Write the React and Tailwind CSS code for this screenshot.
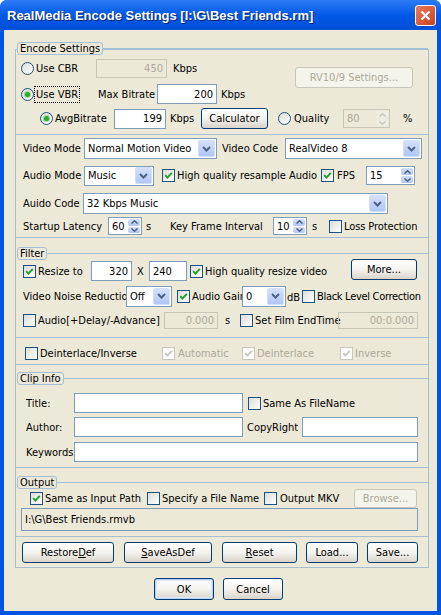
import React from 'react'

const FONT = "font-['DejaVu_Sans_Condensed','Liberation_Sans',sans-serif]"

function Check({ checked, disabled }) {
  return (
    <span
      className={`flex h-[13px] w-[13px] shrink-0 items-center justify-center border ${
        disabled ? 'border-[#cac8bb] bg-white' : 'border-[#1c5180] bg-linear-to-br from-[#dcdcd7] to-white'
      }`}
    >
      {checked && (
        <svg width="9" height="9" viewBox="0 0 9 9">
          <path d="M1.2 4.2 L3.4 6.6 L7.8 1.8" fill="none" stroke={disabled ? '#cac8bb' : '#21a121'} strokeWidth="1.9" />
        </svg>
      )}
    </span>
  )
}

function Radio({ checked }) {
  return (
    <span className="flex h-[13px] w-[13px] shrink-0 items-center justify-center rounded-full border border-[#1c5180] bg-linear-to-br from-[#dcdcd7] to-white">
      {checked && <span className="h-[5px] w-[5px] rounded-full bg-[#2fa82f] shadow-[0_0_0_1px_#9bd89b]" />}
    </span>
  )
}

function Field({ w, h = 'h-[20px]', value = '', right, disabled, ro }) {
  let tone = 'border-[#7f9db9] bg-white'
  if (disabled) tone = 'border-[#c9c7ba] text-[#aca899]'
  if (ro) tone = 'border-[#7f9db9]'
  return (
    <span className={`flex shrink-0 items-center border px-[3px] ${tone} ${right ? 'justify-end' : ''} ${w} ${h}`}>
      {value}
    </span>
  )
}

function Chevron() {
  return (
    <svg width="9" height="6" viewBox="0 0 9 6">
      <path d="M1 1 L4.5 4.5 L8 1" fill="none" stroke="#4d6185" strokeWidth="2" />
    </svg>
  )
}

function Select({ w, h = 'h-[21px]', value }) {
  return (
    <span className={`flex shrink-0 items-center border border-[#7f9db9] bg-white pl-[3px] pr-px ${w} ${h}`}>
      <span className="flex-1 overflow-hidden whitespace-nowrap">{value}</span>
      <span className="flex h-[17px] w-[17px] items-center justify-center rounded-[2px] border border-[#d2dffa] bg-linear-to-b from-[#d4e0fb] to-[#b0c6f5]">
        <Chevron />
      </span>
    </span>
  )
}

function SpinArrow({ up, disabled }) {
  return (
    <span
      className={`flex flex-1 items-center justify-center rounded-[2px] ${
        disabled ? 'bg-[#efeee6]' : 'bg-linear-to-b from-[#d4e0fb] to-[#b0c6f5]'
      }`}
    >
      <svg width="7" height="4" viewBox="0 0 7 4">
        <path
          d={up ? 'M0.5 3.5 L3.5 0.8 L6.5 3.5' : 'M0.5 0.5 L3.5 3.2 L6.5 0.5'}
          fill="none"
          stroke={disabled ? '#cac8bb' : '#4d6185'}
          strokeWidth="1.5"
        />
      </svg>
    </span>
  )
}

function Spin({ w, iw, h = 'h-[19px]', value, disabled }) {
  return (
    <span
      className={`flex shrink-0 border ${disabled ? 'border-[#c9c7ba] text-[#aca899]' : 'border-[#7f9db9] bg-white'} ${w} ${h}`}
    >
      <span className={`flex items-center px-[3px] ${iw}`}>{value}</span>
      <span className="flex flex-1 flex-col gap-px p-px">
        <SpinArrow up disabled={disabled} />
        <SpinArrow disabled={disabled} />
      </span>
    </span>
  )
}

function Btn({ w, h = 'h-[21px]', children, disabled, def }) {
  const tone = disabled
    ? 'border-[#c9c7ba] text-[#aca899] bg-[#f5f4ea]'
    : 'border-[#003c74] bg-linear-to-b from-white via-[#f4f3ee] to-[#d9d4c9]'
  return (
    <span
      className={`flex shrink-0 items-center justify-center rounded-[3px] border ${tone} ${
        def ? 'shadow-[inset_0_0_0_1px_#b9cff5,inset_0_0_0_2px_#dce7fb]' : ''
      } ${w} ${h}`}
    >
      {children}
    </span>
  )
}

function Header({ label, mt }) {
  return (
    <div className={`flex h-[13px] items-center pl-px ${mt}`}>
      <span className="flex h-[13px] items-center rounded-[3px] border border-[#a4bed4] bg-[#ece9d8] px-[2px] leading-none">
        {label}
      </span>
      <span className="h-px flex-1 bg-[#a4bed4]" />
    </div>
  )
}

function Sep({ mt }) {
  return <div className={`h-px bg-[#a4bed4] ${mt}`} />
}

export default function App() {
  return (
    <div className={`${FONT} flex h-[615px] w-[441px] flex-col overflow-hidden rounded-t-[7px] bg-[#0054e3] text-[11px] leading-none text-black`}>
      <div className="flex h-[30px] shrink-0 items-center bg-linear-to-b from-[#2b7cf5] via-[#0058e6] to-[#0050d8] pl-[7px] pr-[5px]">
        <span className="font-['Liberation_Sans',sans-serif] text-[13px] font-bold text-white [text-shadow:1px_1px_0_#0a246a]">
          RealMedia Encode Settings [I:\G\Best Friends.rm]
        </span>
        <span className="ml-auto flex h-[21px] w-[21px] items-center justify-center rounded-[3px] border border-white bg-linear-to-br from-[#e97b5b] to-[#c9401c]">
          <svg width="11" height="11" viewBox="0 0 11 11">
            <path d="M1.5 1.5 L9.5 9.5 M9.5 1.5 L1.5 9.5" stroke="white" strokeWidth="2.2" />
          </svg>
        </span>
      </div>

      <div className="mx-[4px] flex h-[581px] flex-col bg-[#ece9d8] pl-[11px]">
        <div className="mt-[19px] flex w-[414px] flex-col border border-[#a4bed4] pb-[4px]">
          <div className="-mt-[8px]">
            <Header label="Encode Settings" mt="mt-0" />
          </div>

          <div className="mt-[3px] flex">
            <div className="flex w-[279px] flex-col">
              <div className="flex h-[20px] items-center">
                <span className="ml-[5px]"><Radio /></span>
                <span className="ml-px w-[61px] pl-px">Use CBR</span>
                <Field w="w-[71px]" h="h-[19px]" value="450" right disabled />
                <span className="ml-[6px]">Kbps</span>
              </div>
              <div className="mt-[6px] flex h-[20px] items-center">
                <span className="ml-[5px]"><Radio checked /></span>
                <span className="flex w-[64px]">
                  <span className="border border-dotted border-black px-px py-[2px]">Use VBR</span>
                </span>
                <span className="w-[59px]">Max Bitrate</span>
                <Field w="w-[60px]" value="200" right />
                <span className="ml-[4px]">Kbps</span>
              </div>
            </div>
            <div className="mt-[9px]">
              <Btn w="w-[118px]" disabled>RV10/9 Settings...</Btn>
            </div>
          </div>

          <div className="mt-[4px] flex h-[21px] items-center">
            <span className="ml-[24px]"><Radio checked /></span>
            <span className="ml-[2px] w-[59px]">AvgBitrate</span>
            <Field w="w-[52px]" value="199" right />
            <span className="ml-[4px] w-[31px]">Kbps</span>
            <Btn w="w-[67px]" h="h-[21px]">Calculator</Btn>
            <span className="ml-[10px]"><Radio /></span>
            <span className="ml-[3px] w-[49px]">Quality</span>
            <Spin w="w-[47px]" iw="w-[31px]" h="h-[19px]" value="80" disabled />
            <span className="ml-[13px]">%</span>
          </div>

          <Sep mt="mt-[5px]" />

          <div className="mt-[3px] flex h-[21px] items-center">
            <span className="ml-[7px] w-[61px]">Video Mode</span>
            <Select w="w-[133px]" value="Normal Motion Video" />
            <span className="ml-[5px] w-[63px]">Video Code</span>
            <Select w="w-[137px]" value="RealVideo 8" />
          </div>

          <div className="mt-[6px] flex h-[21px] items-center">
            <span className="ml-[7px] w-[61px]">Audio Mode</span>
            <Select w="w-[70px]" h="h-[20px]" value="Music" />
            <span className="ml-[8px]"><Check checked /></span>
            <span className="ml-[2px] w-[144px]">High quality resample Audio</span>
            <Check checked />
            <span className="ml-[3px] w-[29px]">FPS</span>
            <Spin w="w-[49px]" iw="w-[33px]" h="h-[19px]" value="15" />
          </div>

          <div className="mt-[7px] flex h-[21px] items-center">
            <span className="ml-[7px] w-[60px]">Auido Code</span>
            <Select w="w-[305px]" value="32 Kbps Music" />
          </div>

          <div className="mt-[2px] flex h-[20px] items-center">
            <span className="ml-[7px] w-[85px]">Startup Latency</span>
            <Spin w="w-[34px]" iw="w-[18px]" h="h-[18px]" value="60" />
            <span className="ml-[4px] w-[24px]">s</span>
            <span className="w-[103px]">Key Frame Interval</span>
            <Spin w="w-[34px]" iw="w-[18px]" h="h-[18px]" value="10" />
            <span className="ml-[5px] w-[17px]">s</span>
            <Check />
            <span className="ml-[2px] whitespace-nowrap tracking-[-0.1px]">Loss Protection</span>
          </div>

          <Sep mt="mt-px" />

          <Header label="Filter" mt="mt-[9px]" />

          <div className="flex h-[22px] items-center">
            <span className="ml-[7px]"><Check checked /></span>
            <span className="ml-[2px] w-[53px]">Resize to</span>
            <Field w="w-[41px]" value="320" right />
            <span className="ml-[5px] w-[12px]">X</span>
            <Field w="w-[38px]" value="240" />
            <span className="ml-[3px]"><Check checked /></span>
            <span className="ml-[2px] w-[146px]">High quality resize video</span>
            <span className="-mt-[3px]">
              <Btn w="w-[66px]">More...</Btn>
            </span>
          </div>

          <div className="mt-[3px] flex h-[22px] items-center">
            <span className="ml-[7px] w-[103px] overflow-hidden whitespace-nowrap">Video Noise Reduction</span>
            <Select w="w-[46px]" value="Off" />
            <span className="ml-[5px]"><Check checked /></span>
            <span className="ml-[2px] w-[50px] overflow-hidden whitespace-nowrap">Audio Gain</span>
            <Select w="w-[44px]" value="0" />
            <span className="ml-px w-[15px] pt-[3px]">dB</span>
            <Check />
            <span className="ml-[2px] whitespace-nowrap tracking-[-0.3px]">Black Level Correction</span>
          </div>

          <div className="mt-[3px] flex h-[20px] items-center">
            <span className="ml-[7px]"><Check /></span>
            <span className="ml-[2px] w-[126px] whitespace-nowrap">Audio[+Delay/-Advance]</span>
            <Field w="w-[54px]" h="h-[17px]" value="0.000" right disabled />
            <span className="ml-[7px] w-[15px]">s</span>
            <Check />
            <span className="ml-[2px] w-[83px] whitespace-nowrap">Set Film EndTime</span>
            <Field w="w-[80px]" h="h-[17px]" value="00:0.000" right disabled />
          </div>

          <Sep mt="mt-[7px]" />

          <div className="mt-[6px] flex h-[18px] items-center">
            <span className="ml-[9px]"><Check /></span>
            <span className="ml-[2px] w-[122px]">Deinterlace/Inverse</span>
            <Check checked disabled />
            <span className="ml-[3px] w-[64px] text-[#aca899]">Automatic</span>
            <Check checked disabled />
            <span className="ml-[2px] w-[83px] text-[#aca899]">Deinterlace</span>
            <Check checked disabled />
            <span className="ml-[2px] text-[#aca899]">Inverse</span>
          </div>

          <Sep mt="mt-[2px]" />

          <Header label="Clip Info" mt="mt-[7px]" />

          <div className="mt-[8px] flex h-[20px] items-center">
            <span className="ml-[10px] w-[48px]">Title:</span>
            <Field w="w-[169px]" />
            <span className="ml-[5px]"><Check /></span>
            <span className="ml-[2px]">Same As FileName</span>
          </div>

          <div className="mt-[4px] flex h-[20px] items-center">
            <span className="ml-[10px] w-[48px]">Author:</span>
            <Field w="w-[169px]" />
            <span className="ml-[4px] w-[55px]">CopyRight</span>
            <Field w="w-[116px]" />
          </div>

          <div className="mt-[5px] flex h-[20px] items-center">
            <span className="ml-[10px] w-[48px]">Keywords</span>
            <Field w="w-[344px]" />
          </div>

          <Sep mt="mt-[5px]" />

          <Header label="Output" mt="mt-[8px]" />

          <div className="flex h-[19px] items-center">
            <span className="ml-[14px]"><Check checked /></span>
            <span className="ml-[2px] w-[102px]">Same as Input Path</span>
            <Check />
            <span className="ml-[2px] w-[102px]">Specify a File Name</span>
            <Check />
            <span className="ml-[3px] w-[74px]">Output MKV</span>
            <Btn w="w-[63px]" h="h-[19px]" disabled>Browse...</Btn>
          </div>

          <div className="flex h-[23px] items-center">
            <span className="ml-[5px]">
              <Field w="w-[397px]" h="h-[23px]" value="I:\G\Best Friends.rmvb" ro />
            </span>
          </div>

          <Sep mt="mt-[5px]" />

          <div className="mt-[5px] flex h-[21px] items-center">
            <span className="ml-[6px]"><Btn w="w-[92px]">Restore<u>D</u>ef</Btn></span>
            <span className="ml-[10px]"><Btn w="w-[88px]"><u>S</u>aveAsDef</Btn></span>
            <span className="ml-[10px]"><Btn w="w-[75px]"><u>R</u>eset</Btn></span>
            <span className="ml-[9px]"><Btn w="w-[52px]">Load...</Btn></span>
            <span className="ml-[9px]"><Btn w="w-[51px]">Save...</Btn></span>
          </div>
        </div>

        <div className="mt-[10px] flex h-[22px] items-center">
          <span className="ml-[139px]"><Btn w="w-[60px]" h="h-[22px]" def>OK</Btn></span>
          <span className="ml-[9px]"><Btn w="w-[60px]" h="h-[22px]">Cancel</Btn></span>
        </div>
      </div>
    </div>
  )
}
